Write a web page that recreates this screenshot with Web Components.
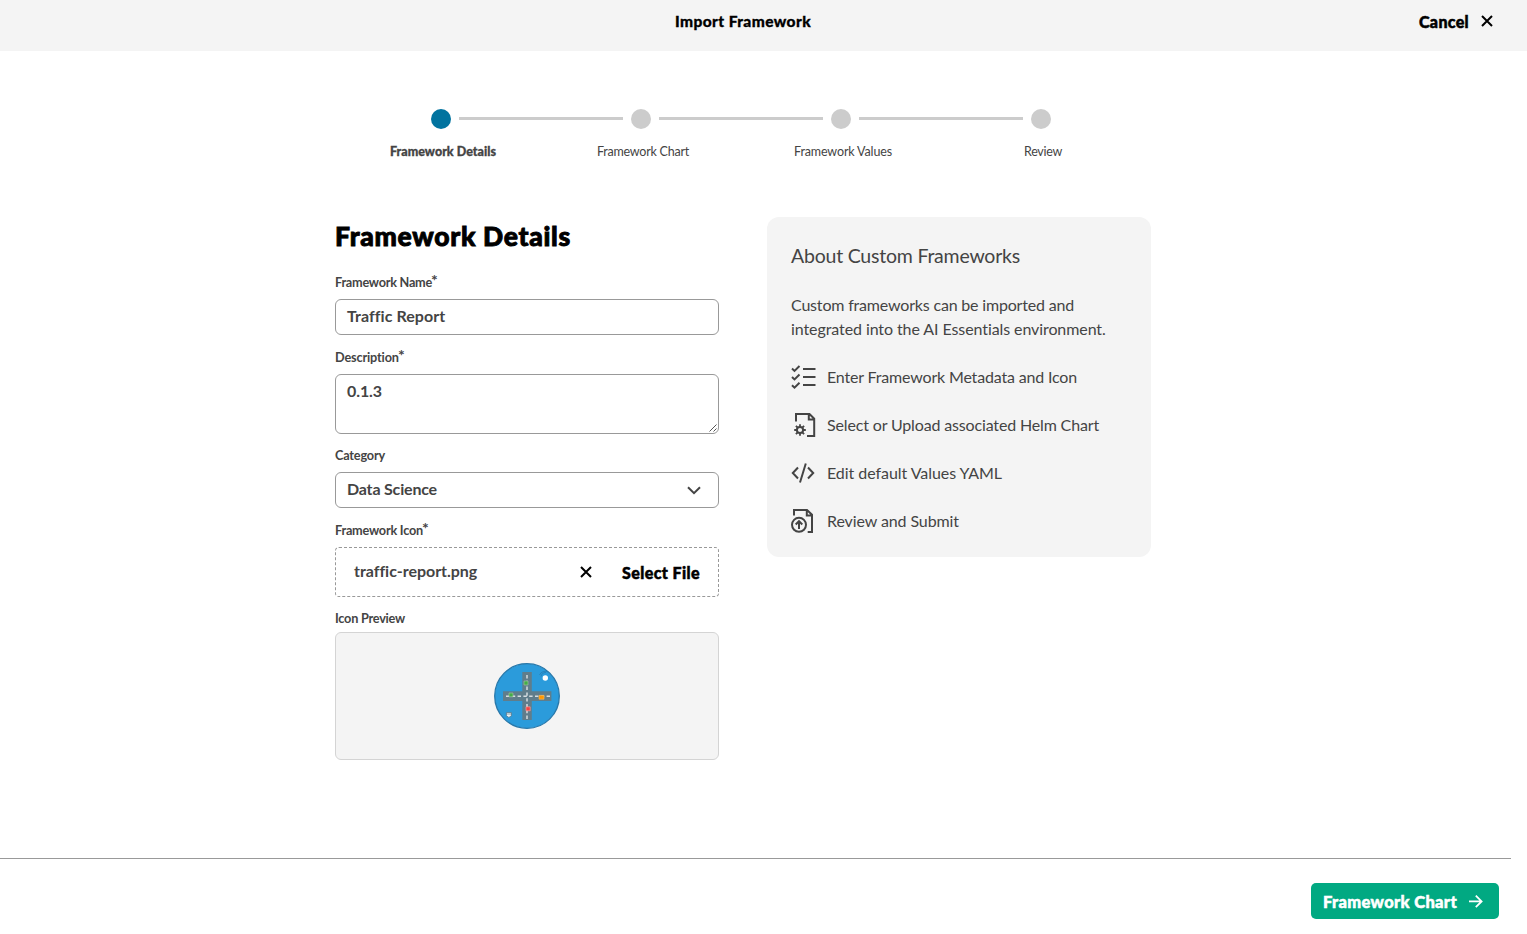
<!DOCTYPE html>
<html lang="en">
<head>
<meta charset="utf-8">
<title>Import Framework</title>
<style>
html,body{margin:0;height:100%;background:#fff;overflow:hidden}
body{font-family:Lato,"Noto Sans",sans-serif;color:#444}
</style>
</head>
<body>
<import-page></import-page>
<script>
const define = (name, html, setup) => customElements.define(name, class extends HTMLElement {
  connectedCallback() {
    if (this.shadowRoot) return;
    const t = document.createElement('template');
    t.innerHTML = html;
    this.attachShadow({mode: 'open'}).append(t.content.cloneNode(true));
    if (setup) setup(this, this.shadowRoot);
  }
});

// A run of text tracked so that it spans the width given in "w".
define('ui-text', `<style>:host{display:block;white-space:nowrap;flex:none}span{display:inline-block}</style><span><slot></slot></span>`,
  (el, root) => {
    const span = root.querySelector('span');
    const w = parseFloat(el.getAttribute('w'));
    const n = el.textContent.length;
    el.style.letterSpacing = '0px';
    const natural = span.getBoundingClientRect().width;
    const gap = (w - natural) / n;
    el.style.letterSpacing = gap.toFixed(3) + 'px';
    el.style.width = w + 'px';
  });

define('app-header', `<style>
:host{display:grid;grid-template-columns:1fr auto 1fr;height:51px;background:#f4f4f4;color:#000;box-sizing:border-box;padding:0 34px 0 0}
.title{grid-column:2;font:900 15.5px/20px Lato;-webkit-text-stroke:.3px;padding:11px 0 0 34px;margin-right:41px}
.cancel{display:flex;justify-content:flex-end;gap:12px;font:900 16px/20px Lato;-webkit-text-stroke:.5px;padding-top:12px}
svg{margin-top:3px}
</style><div class="title"><ui-text w="136">Import Framework</ui-text></div>
<div class="cancel"><ui-text w="50">Cancel</ui-text><svg width="12" height="12" viewBox="0 0 12 12" fill="none" stroke="#000" stroke-width="2"><path d="M1 1l10 10M11 1L1 11"/></svg></div>`);

define('step-item', `<style>
:host{display:grid;grid-template-rows:20px 20px;row-gap:13px;width:200px;font:400 12.5px/20px Lato;color:#444}
:host([active]){font-weight:900;-webkit-text-stroke:.3px}
.track{display:grid;grid-template-columns:82px 20px 82px;column-gap:8px;align-items:center}
.track{margin-left:-2px}
i{height:3px;background:#ccc;margin-bottom:1px}
b{width:20px;height:20px;border-radius:50%;background:#ccc}
:host([active]) b{background:#01739f}
:host([first]) .l,:host([last]) .r{visibility:hidden}
.label{display:flex;justify-content:center}
</style><div class="track"><i class="l"></i><b></b><i class="r"></i></div><div class="label"><slot></slot></div>`);

define('form-field', `<style>
:host{display:block}
.label{display:flex;align-items:flex-end;box-sizing:border-box;height:var(--label,39px);padding-bottom:var(--pad,8px);font:700 12.7px/18px Lato;color:#444}
sup{font:700 16px/18px Lato;display:none;position:relative;top:-2px;left:-1px;height:18px}
:host([required]) sup{display:block}
.box{box-sizing:border-box;display:flex;height:var(--h,36px);border:1px var(--line,solid) var(--edge,#999);border-radius:var(--radius,6px);background:var(--fill,#fff);padding:var(--inner,0 11px 2px);align-items:var(--align,center);font:700 16px/24px Lato;position:relative}
</style><div class="label"><slot name="label"></slot><sup>*</sup></div><div class="box"><slot></slot></div>`);

define('traffic-icon', `<style>:host{display:block;width:66px;height:66px;margin:auto}svg{display:block}</style>
<svg width="66" height="66" viewBox="0 0 66 66"><circle cx="33" cy="33" r="32.3" fill="#2b9bdb" stroke="#2878aa" stroke-width="1.3"/>
<path d="M28.3 9h9.5v48h-9.5zM9 28.3h48.4V38H9z" fill="#607d8b"/>
<path d="M33 12v46M12 33.2h46" stroke="#d5dde1" stroke-width="1.5" stroke-dasharray="3.4 2.4" fill="none"/>
<g stroke="#a8c8a9" stroke-width=".6"><path fill="#43ae48" d="M30 18h4v4h-4zM15 30h4v3.8h-4z"/><path fill="#f44343" stroke="#ffaaa6" d="M32 43.8h4.2v4H32z"/><path fill="#ff9800" stroke="#ffc15c" d="M45 32.4h5v3.8h-5z"/></g>
<circle cx="51.3" cy="15" r="2.7" fill="#fff"/><path d="M45.5 12a6.5 6.5 0 0 1 9-3M47 13.5a5 5 0 0 1 5-4" fill="none" stroke="#2579ac" stroke-width=".7"/>
<path d="M12.4 49.5h5v3.3l-2.5 1.6-2.5-1.6z" fill="#edf4f7" stroke="#496f85" stroke-width=".7"/><path d="M12 51h6" stroke="#607d8b" stroke-width=".7"/></svg>`);

const ICONS = {
  list: '<path d="M1 3.5l2.5 2.4L8.5 1M1 12l2.5 2.4 5-4.9M1 20.3l2.5 2.4 5-4.9M12 3.9h12.5M12 12.1h12.5M12 20.1h12.5"/>',
  chart: '<path d="M5 8.5V1h13.5L23.2 5.7V23H16M17.8 1.3v5.2H23"/><circle cx="9" cy="17" r="3.1"/><path stroke-width="1.8" d="M9 11.2v2.5M9 20.3v2.5M3.2 17h2.5M12.3 17h2.5M4.9 12.9l1.8 1.8M11.3 19.3l1.8 1.8M13.1 12.9l-1.8 1.8M6.7 19.3l-1.8 1.8"/>',
  code: '<path d="M7 6.5L1.8 12 7 17.5M17 6.5l5.2 5.5-5.2 5.5M14.8 2.5L9 21.5"/>',
  submit: '<path d="M3 6.5V1h13l5 4.8V23h-4.3M15.8 1.3v5.2h5"/><circle cx="8" cy="15.8" r="7"/><path d="M8 20v-7.5M4.7 15.5L8 12.2l3.3 3.3"/>'
};
define('info-row', `<style>
:host{display:flex;align-items:center;gap:11px;height:24px;font:400 16px/24px Lato}
svg{display:block;overflow:visible;flex:none}
</style><svg width="25" height="24" viewBox="0 0 25 24" fill="none" stroke="#444" stroke-width="2"></svg><slot></slot>`,
  (el, root) => { root.querySelector('svg').innerHTML = ICONS[el.getAttribute('icon')]; });

define('info-card', `<style>
:host{display:flex;flex-direction:column;box-sizing:border-box;width:384px;height:340px;background:#f4f4f4;border-radius:12px;padding:24px;color:#444}
.h{font:400 19.5px/30px Lato}
.p{font:400 16px/24px Lato;margin:22px 0 24px}
.rows{display:flex;flex-direction:column;gap:24px}
</style><div class="h"><ui-text w="229">About Custom Frameworks</ui-text></div>
<div class="p"><ui-text w="283">Custom frameworks can be imported and</ui-text><ui-text w="315">integrated into the AI Essentials environment.</ui-text></div>
<div class="rows">
<info-row icon="list"><ui-text w="250">Enter Framework Metadata and Icon</ui-text></info-row>
<info-row icon="chart"><ui-text w="272">Select or Upload associated Helm Chart</ui-text></info-row>
<info-row icon="code"><ui-text w="175">Edit default Values YAML</ui-text></info-row>
<info-row icon="submit"><ui-text w="132">Review and Submit</ui-text></info-row>
</div>`);

define('details-form', `<style>
:host{display:block;width:384px}
.h{display:flow-root;font:900 26.5px/40px Lato;-webkit-text-stroke:.9px;color:#000;height:43px;box-sizing:border-box}
.h ui-text{margin-top:-1px}
.area{--h:60px;--align:flex-start;--inner:4px 11px}
.cat{--label:38px}
.file{--h:50px;--line:dashed;--radius:4px;--inner:0 18px}
.prev{--label:35px;--pad:5px;--h:128px;--fill:#f4f4f4;--edge:#d4d4d4;--inner:0 11px}
.area svg{position:absolute;right:0;bottom:0}
.down{margin:2px 6px 0 auto}
.name{margin-top:-2px}
.x{margin:0 30px 0 auto}
.sel{font:900 16px/24px Lato;-webkit-text-stroke:.5px;color:#000;padding-top:2px}
</style><div class="h"><ui-text w="236">Framework Details</ui-text></div>
<form-field required><ui-text slot="label" w="97">Framework Name</ui-text><ui-text w="97.5">Traffic Report</ui-text></form-field>
<form-field required class="area"><ui-text slot="label" w="64">Description</ui-text><ui-text w="35">0.1.3</ui-text><svg width="10" height="10" viewBox="0 0 10 10" stroke="#555" stroke-width="1"><path d="M1.5 8.5l7-7M5.5 8.5l3-3"/></svg></form-field>
<form-field class="cat"><ui-text slot="label" w="50">Category</ui-text><ui-text w="90">Data Science</ui-text><svg class="down" width="14" height="9" viewBox="0 0 14 9" fill="none" stroke="#444" stroke-width="2"><path d="M1 1.2l6 6 6-6"/></svg></form-field>
<form-field required class="file"><ui-text slot="label" w="88">Framework Icon</ui-text><ui-text class="name" w="122.5">traffic-report.png</ui-text><svg class="x" width="12" height="12" viewBox="0 0 12 12" fill="none" stroke="#000" stroke-width="2"><path d="M1 1l10 10M11 1L1 11"/></svg><div class="sel"><ui-text w="78">Select File</ui-text></div></form-field>
<form-field class="prev"><ui-text slot="label" w="70">Icon Preview</ui-text><traffic-icon></traffic-icon></form-field>`);

define('app-footer', `<style>
:host{display:flex;justify-content:flex-end;align-items:flex-start;box-sizing:border-box;height:76px;width:1511px;border-top:1px solid #999;padding:24px 12px 0 0}
.btn{display:flex;align-items:center;gap:12px;box-sizing:border-box;width:188px;height:36px;border-radius:5px;background:#01a982;color:#fff;padding:2px 12px 0;font:900 16.5px/24px Lato;-webkit-text-stroke:.5px}
svg{margin-top:-2px}
</style><div class="btn"><ui-text w="134">Framework Chart</ui-text><svg width="14" height="14" viewBox="0 0 14 14" fill="none" stroke="#fff" stroke-width="1.8"><path d="M0 7.4h12.5M6.8 1.6l5.8 5.8-5.8 5.8"/></svg></div>`);

define('import-page', `<style>
:host{display:flex;flex-direction:column;height:934px;width:1527px}
.steps{display:flex;margin:58px 0 0 343px}
.body{display:flex;gap:48px;margin:55px 0 0 335px;flex:1}
</style><app-header></app-header>
<div class="steps">
<step-item active first><ui-text w="106">Framework Details</ui-text></step-item>
<step-item><ui-text w="92">Framework Chart</ui-text></step-item>
<step-item><ui-text w="98">Framework Values</ui-text></step-item>
<step-item last><ui-text w="38">Review</ui-text></step-item>
</div>
<div class="body"><details-form></details-form><info-card></info-card></div>
<app-footer></app-footer>`);
</script>
</body>
</html>
